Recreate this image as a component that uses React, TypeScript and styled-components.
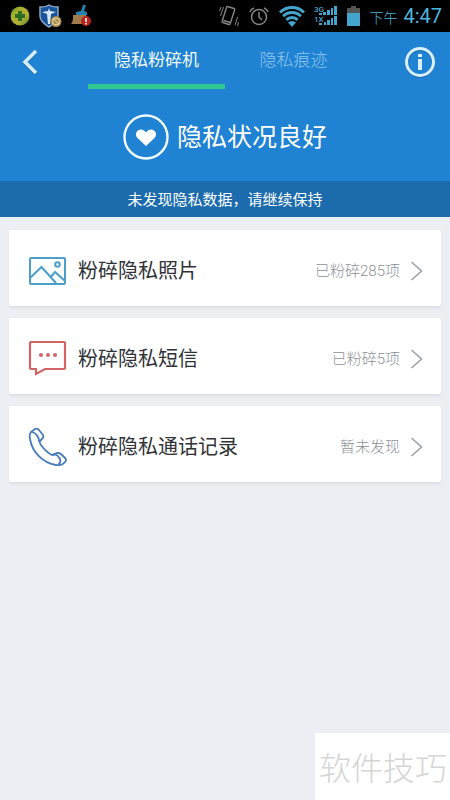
import React from "react";
import styled, { createGlobalStyle } from "styled-components";

const Global = createGlobalStyle`
  * { box-sizing: border-box; }
  body { margin: 0; background: #ebeef3; }
  body, button { font-family: Roboto, "Noto Sans CJK SC", sans-serif; }
  button { border: 0; padding: 0; background: none; color: inherit; cursor: pointer; }
  svg { display: block; flex: none; }
  h1, h2, p { margin: 0; font-weight: 400; }
`;

const Page = styled.div`
  min-height: 100vh;
  background: #ebeef3;
`;

const StatusBar = styled.div`
  display: flex;
  align-items: center;
  justify-content: space-between;
  height: 32px;
  padding: 0 8px 0 10px;
  background: #000;
  color: #4db6dc;
`;

const StatusGroup = styled.div<{ $gap: number }>`
  display: flex;
  align-items: center;
  gap: ${(p) => p.$gap}px;
`;

const Clock = styled.div`
  display: flex;
  align-items: center;
  gap: 6px;
  font-size: 20px;
  line-height: 24px;
`;

const DayPart = styled.span`
  padding-top: 3px;
  font-size: 14px;
  line-height: 20px;
  font-weight: 300;
`;

const Header = styled.header`
  background: #1f82d2;
  color: #fff;
`;

const NavBar = styled.nav`
  display: grid;
  grid-template-columns: 88px 1fr 1fr 88px;
  height: 57px;
`;

const NavButton = styled.button<{ $side: "start" | "end" }>`
  display: flex;
  align-items: center;
  justify-content: ${(p) => (p.$side === "start" ? "flex-start" : "flex-end")};
  && { padding: 3px 14px 0; }
`;

const Tab = styled.button<{ $active?: boolean }>`
  && {
    border-top: 3px solid transparent;
    border-bottom: 5px solid ${(p) => (p.$active ? "#2fc88f" : "transparent")};
    color: ${(p) => (p.$active ? "#f2fbff" : "#8fc6ee")};
  }
  font-size: 17px;
  line-height: 24px;
  font-weight: ${(p) => (p.$active ? 400 : 300)};
`;

const Hero = styled.div`
  display: flex;
  align-items: center;
  justify-content: center;
  gap: 8px;
  height: 92px;
  padding-top: 4px;
`;

const HeroTitle = styled.h1`
  padding-top: 2px;
  font-size: 25px;
  line-height: 36px;
`;

const Banner = styled.p`
  height: 36px;
  padding-top: 2px;
  background: #1b6bad;
  font-size: 15px;
  line-height: 34px;
  text-align: center;
`;

const List = styled.main`
  display: flex;
  flex-direction: column;
  gap: 12px;
  padding: 13px 9px;
`;

const Row = styled.button`
  display: flex;
  align-items: center;
  height: 76px;
  border-radius: 2px;
  box-shadow: 0 2px 2px #dcdfe5;
  text-align: left;
  && {
    padding: 5px 18px 0 19px;
    background: #fff;
  }
`;

const RowTitle = styled.span`
  flex: 1;
  padding-top: 1px;
  margin-left: 11px;
  color: #303236;
  font-size: 20px;
  line-height: 28px;
`;

const RowStatus = styled.span`
  margin-right: 10px;
  color: #8c9196;
  font-size: 15px;
  line-height: 22px;
  font-weight: 300;
`;

const Watermark = styled.div`
  position: fixed;
  right: 0;
  bottom: 0;
  padding: 9px 3px 10px 4px;
  background: #fff;
  color: #d5d5d5;
  font-family: "Noto Sans CJK SC", sans-serif;
  font-size: 32px;
  font-weight: 300;
  line-height: 48px;
`;

const StatusLeft = () => (
  <StatusGroup $gap={9}>
    <svg width="20" height="20" viewBox="0 0 20 20">
      <defs>
        <linearGradient id="ball" x1="0" y1="0" x2="1" y2="1">
          <stop offset="0" stopColor="#3f8a2a" />
          <stop offset="0.3" stopColor="#a9b02f" />
          <stop offset="0.65" stopColor="#b5ae38" />
          <stop offset="1" stopColor="#3f7f2a" />
        </linearGradient>
      </defs>
      <circle cx="10" cy="10" r="9.5" fill="url(#ball)" />
      <path d="M8 5h4v3h3v4h-3v3H8v-3H5V8h3z" fill="#2c6f22" />
    </svg>
    <svg width="23" height="24" viewBox="0 0 23 24">
      <path d="M10 1c3 2 6 2 9 2v9c0 5-4 8-9 11-5-3-9-6-9-11V3c3 0 6 0 9-2z" fill="#17549b" stroke="#8ba8c4" strokeWidth="1.5" />
      <path d="M10 4l1 3 6 1-5 2-1 10h-2L8 10 3 8l6-1z" fill="#d6e6f2" />
      <circle cx="17" cy="17.500" r="5.5" fill="#a88c4c" />
      <circle cx="17" cy="17.500" r="3.500" fill="none" stroke="#eee0b0" />
      <path d="M14.500 15l5 5" stroke="#eee0b0" />
    </svg>
    <svg width="20" height="22" viewBox="0 0 20 22">
      <path d="M2 10h13l2 9H0c2-2 2-5 2-9z" fill="#a07c4c" />
      <path d="M5 7l5-1 2-6h3l-2 6 3 1v3H5z" fill="#2583ae" />
      <circle cx="15" cy="16" r="5" fill="#b9211d" />
      <path d="M15 13v4m0 1v1.5" stroke="#fff" strokeWidth="1.6" />
    </svg>
  </StatusGroup>
);

const StatusRight = () => (
  <StatusGroup $gap={9}>
    <svg width="20" height="22" viewBox="0 0 20 22" fill="none" stroke="#858585" strokeWidth="1.4">
      <path d="M8.500 1.500l6.500 2q1 .3.700 1.300l-4.500 14q-.4 1-1.400.7l-6-2q-1-.3-.7-1.300l4.500-14q.2-1 .9-.7zM4.500 15.500l7 2" />
      <path d="M4.500 2L1.500 11M2 2L.5 6M18.500 12L16 20M19.500 17l-1 4" strokeWidth="1" />
    </svg>
    <svg width="22" height="22" viewBox="0 0 22 22" fill="none" stroke="#858585" strokeWidth="1.5">
      <circle cx="11" cy="12" r="7.5" />
      <path d="M11 7v5l3 3M2 7a6 6 0 014-4M20 7a6 6 0 00-4-4" />
    </svg>
    <svg width="26" height="22" viewBox="0 0 26 22" fill="none" stroke="#43a5ce" strokeWidth="3">
      <path d="M1 7.500a17 17 0 0124 0M4.200 11.200a12.500 12.500 0 0117.600 0M7.400 14.900a8 8 0 0111.200 0" />
      <path d="M9 17.500a6 6 0 018 0L13 22z" fill="#43a5ce" stroke="none" />
    </svg>
    <svg width="24" height="22" viewBox="0 0 24 22" fill="#43a5ce">
      <text x="0" y="7" fontSize="8" fontWeight="500" fontFamily="Roboto">3G</text>
      <text x="0" y="17" fontSize="8" fontWeight="500" fontFamily="Roboto">1X</text>
      <path d="M5 8h3v2H5zM9 7h3v3H9zM13 5h3v5h-3zM17 3h2v7h-2zM20 1h3v9h-3zM5 18h3v2H5zM10 17h2v3h-2zM13 15h3v5h-3zM17 13h2v7h-2zM20 11h3v9h-3z" />
    </svg>
    <svg width="13" height="20" viewBox="0 0 13 20">
      <path d="M4 0h5v2h4v6H0V2h4z" fill="#555" />
      <path d="M0 7h13v13H0z" fill="#43a5ce" />
    </svg>
    <Clock>
      <DayPart>下午</DayPart>
      <span>4:47</span>
    </Clock>
  </StatusGroup>
);

const PhotoIcon = () => (
  <svg width="39" height="38" viewBox="0 0 39 38" fill="none" stroke="#4b9fcb" strokeWidth="2">
    <rect x="2" y="6" width="35" height="26" rx="1" />
    <path d="M2 26l11.500-11L28 31M22 26l5-6 10 9" />
    <circle cx="29.500" cy="12.500" r="2.300" />
  </svg>
);

const MessageIcon = () => (
  <svg width="39" height="38" viewBox="0 0 39 38" fill="none" stroke="#d26467" strokeWidth="2.200">
    <path d="M3 2h33q1 0 1 1v25q0 1-1 1H17l-9 5v-5H3q-1 0-1-1V3q0-1 1-1z" />
    <g fill="#d26467" stroke="none">
      <circle cx="13" cy="15" r="2" />
      <circle cx="20" cy="15" r="2" />
      <circle cx="27" cy="15" r="2" />
    </g>
  </svg>
);

const PhoneIcon = () => (
  <svg width="39" height="38" viewBox="0 0 39 38" fill="none" stroke="#477cbd" strokeWidth="1.8" strokeLinejoin="round" strokeLinecap="round">
    <path d="M3 4L7 1q2-1 4 1l4 5q1 2-1 4l-2 2q-1 1 1 4 5 7 11 10 2 0 3-1 3-2 6 0l4 4q2 2 0 4-3 4-9 3C15 35 4 24 2 11q-1-4 1-7z" />
    <path d="M4 4q4 1 6 5 1 2 1 4M26 26q4 1 6 5 1 3-1 5" />
  </svg>
);

const Chevron = () => (
  <svg width="13" height="20" viewBox="0 0 13 20" fill="none" stroke="#99a0a6" strokeWidth="1.5">
    <path d="M1.500 1l10 9-10 9" />
  </svg>
);

const items = [
  { icon: <PhotoIcon />, title: "粉碎隐私照片", status: "已粉碎285项" },
  { icon: <MessageIcon />, title: "粉碎隐私短信", status: "已粉碎5项" },
  { icon: <PhoneIcon />, title: "粉碎隐私通话记录", status: "暂未发现" },
];

export default function App() {
  return (
    <Page>
      <Global />
      <StatusBar>
        <StatusLeft />
        <StatusRight />
      </StatusBar>
      <Header>
        <NavBar>
          <NavButton $side="start" aria-label="返回">
            <svg width="32" height="32" viewBox="0 0 32 32" fill="none" strokeWidth="3.6">
              <path d="M22 6L11 17l11 11" stroke="#1a69ae" />
              <path d="M22 5L11 16l11 11" stroke="#d5edfb" />
            </svg>
          </NavButton>
          <Tab $active>隐私粉碎机</Tab>
          <Tab>隐私痕迹</Tab>
          <NavButton $side="end" aria-label="信息">
            <svg width="32" height="34" viewBox="0 0 32 34">
              <circle cx="16" cy="18" r="13.500" fill="none" stroke="#1a69ae" strokeWidth="3" />
              <circle cx="16" cy="17" r="13.500" fill="none" stroke="#d8effc" strokeWidth="3" />
              <path d="M14 9h4v3h-4zM14 14h4v11h-4z" fill="#d8effc" />
            </svg>
          </NavButton>
        </NavBar>
        <Hero>
          <svg width="46" height="46" viewBox="0 0 46 46">
            <circle cx="23" cy="23" r="21.500" fill="none" stroke="#f0fbff" strokeWidth="2.400" />
            <path d="M23 32l-8-7.500c-3-3-2.500-6 0-8 2.500-1.800 6-1 8 2 2-3 5.500-3.800 8-2 2.500 2 3 5 0 8z" fill="#fff" />
          </svg>
          <HeroTitle>隐私状况良好</HeroTitle>
        </Hero>
        <Banner>未发现隐私数据，请继续保持</Banner>
      </Header>
      <List>
        {items.map((item) => (
          <Row key={item.title}>
            {item.icon}
            <RowTitle>{item.title}</RowTitle>
            <RowStatus>{item.status}</RowStatus>
            <Chevron />
          </Row>
        ))}
      </List>
      <Watermark>软件技巧</Watermark>
    </Page>
  );
}
